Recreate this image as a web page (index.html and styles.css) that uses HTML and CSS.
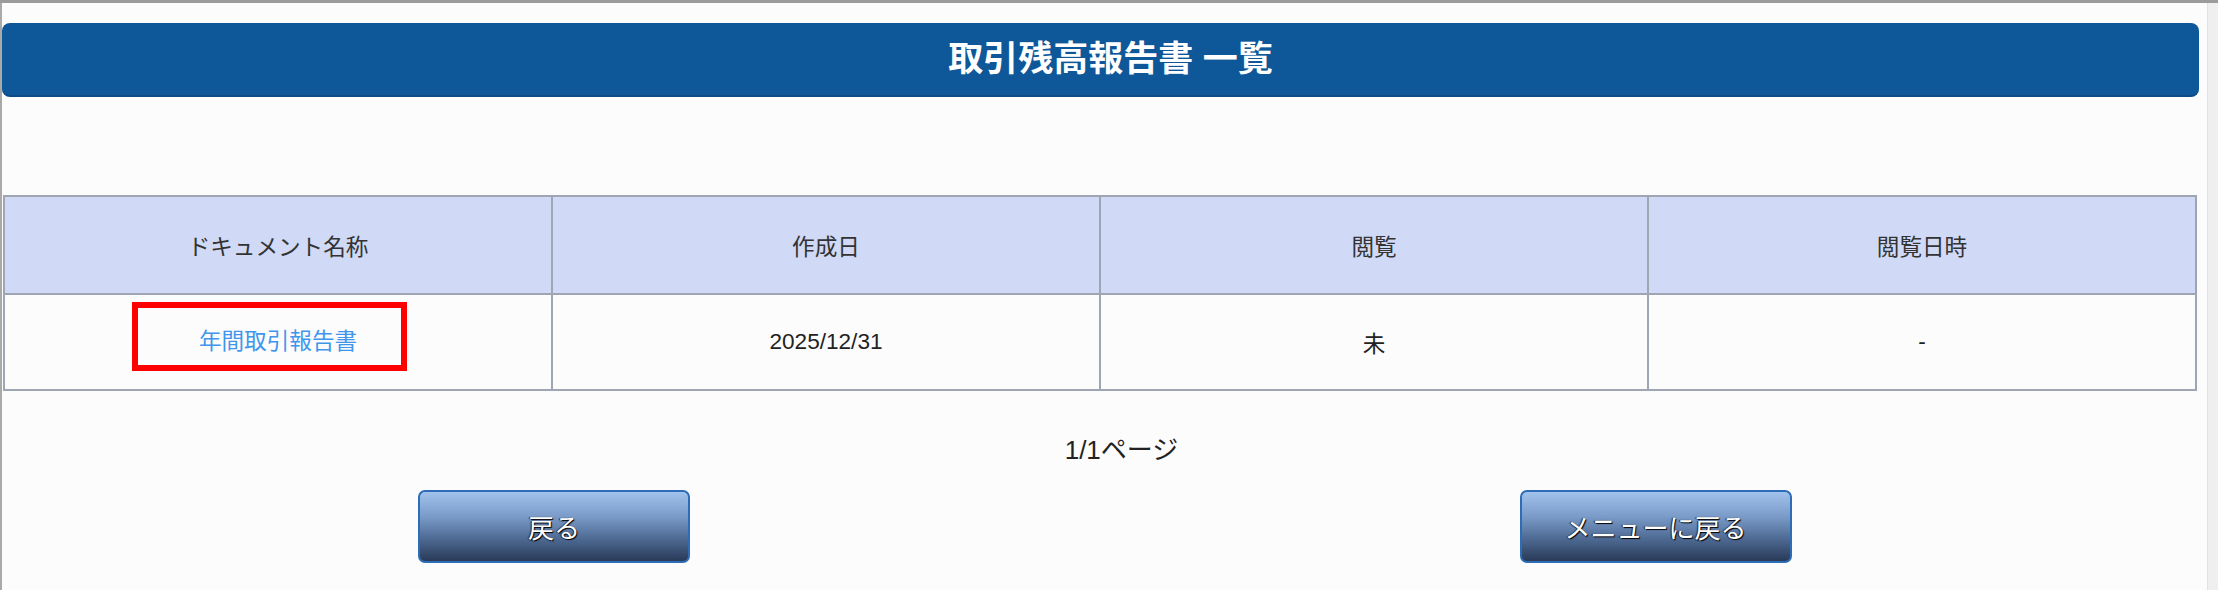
FILE: index.html
```html
<!DOCTYPE html>
<html lang="ja">
<head>
<meta charset="utf-8">
<title>取引残高報告書 一覧</title>
<link rel="stylesheet" href="styles.css">
</head>
<body>
<div class="frame">
  <div class="page">
    <h1 class="title-bar">取引残高報告書 一覧</h1>
    <table class="doc-table">
      <thead>
        <tr>
          <th>ドキュメント名称</th>
          <th>作成日</th>
          <th>閲覧</th>
          <th>閲覧日時</th>
        </tr>
      </thead>
      <tbody>
        <tr>
          <td><a class="doc-link" href="#">年間取引報告書</a></td>
          <td>2025/12/31</td>
          <td>未</td>
          <td>-</td>
        </tr>
      </tbody>
    </table>
    <div class="pager">1/1ページ</div>
    <div class="button-row">
      <div class="button-cell"><button class="nav-button" type="button">戻る</button></div>
      <div class="button-cell"><button class="nav-button" type="button">メニューに戻る</button></div>
    </div>
  </div>
</div>
<div class="gutter"></div>
</body>
</html>
```

FILE: styles.css
```css
html, body {
  margin: 0;
  padding: 0;
}

body {
  display: flex;
  height: 590px;
  overflow: hidden;
  background: #fcfcfc;
  border-top: 3px solid #9b9b9b;
  box-sizing: border-box;
  font-family: "Liberation Sans", "Noto Sans CJK JP", sans-serif;
  color: #222;
}

.frame {
  flex: 1;
  border-left: 2px solid #a9a9a9;
  background: #fcfcfc;
}

.gutter {
  width: 10px;
  background: #efefef;
  border-left: 1px solid #e2e2e2;
}

.page {
  width: 2197px;
}

.title-bar {
  margin: 20px 0 0 0;
  height: 74px;
  box-sizing: border-box;
  background: #0e5799;
  border-bottom: 2px solid #0a4b88;
  border-radius: 8px;
  color: #fff;
  font-size: 35px;
  font-weight: bold;
  line-height: 72px;
  text-align: center;
  padding-left: 20px;
}

.doc-table {
  margin: 98px 0 0 1px;
  width: 2194px;
  border-collapse: separate;
  border-spacing: 0;
  border-top: 2px solid #9ea6b4;
  border-left: 2px solid #9ea6b4;
  table-layout: fixed;
  font-size: 22.6px;
}

.doc-table th,
.doc-table td {
  border-right: 2px solid #9ea6b4;
  border-bottom: 2px solid #9ea6b4;
  padding: 0;
  text-align: center;
  vertical-align: middle;
}

.doc-table th {
  height: 96px;
  background: #d0d9f5;
  font-weight: normal;
  color: #333;
}

.doc-table td {
  height: 94px;
  background: #fcfcfc;
  color: #222;
}

.doc-link {
  position: relative;
  display: inline-block;
  line-height: 30px;
  color: #4096ec;
  text-decoration: none;
}

.doc-link::after {
  content: "";
  position: absolute;
  left: -67px;
  right: -50px;
  top: -25px;
  bottom: -14px;
  border: 6px solid #ff0000;
}

.pager {
  margin-top: 43px;
  line-height: 32px;
  font-size: 26px;
  text-align: center;
  padding-left: 42px;
  color: #222;
}

.button-row {
  margin: 24px 0 0 2px;
  display: grid;
  grid-template-columns: 1100px 1103px;
}

.button-cell {
  display: flex;
  justify-content: center;
}

.nav-button {
  width: 272px;
  height: 73px;
  border: 2px solid #2d6cb6;
  border-radius: 7px;
  background: linear-gradient(to bottom, #a1c2ec 0%, #7b9cc9 35%, #516e98 65%, #293a58 100%);
  color: #fff;
  font-family: "Liberation Sans", "Noto Sans CJK JP", sans-serif;
  font-size: 26px;
  text-shadow: 1px 1px 1px #000, -1px 0 1px #222;
  padding: 0;
  cursor: pointer;
}
```
